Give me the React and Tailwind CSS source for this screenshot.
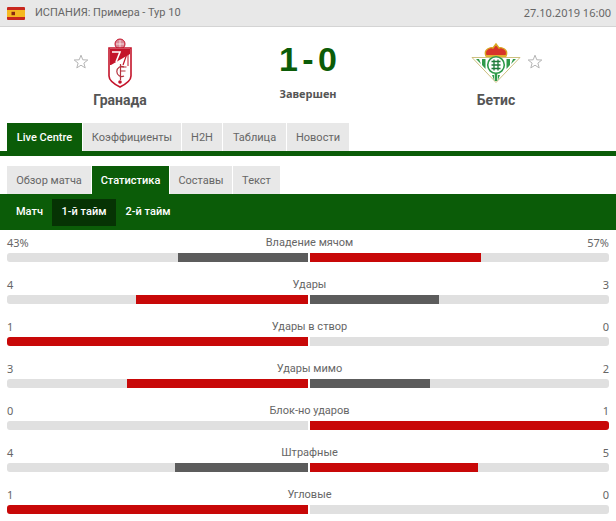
const F = "font-['Roboto','Noto_Sans',sans-serif]";

function Star() {
  return (
    <svg width="16" height="15" viewBox="0 0 16 15" fill="none" stroke="#b5b5b5" strokeWidth="1">
      <path d="M8 1.2 L9.8 5.8 L14.8 6 L10.9 9.1 L12.2 13.9 L8 11.2 L3.8 13.9 L5.1 9.1 L1.2 6 L6.2 5.8 Z" />
    </svg>
  );
}

function Flag() {
  return (
    <svg width="18" height="13" viewBox="0 0 18 13">
      <rect width="18" height="13" rx="1" fill="#c8281e" />
      <rect y="3" width="18" height="7" fill="#f5b921" />
      <rect x="4.5" y="4.8" width="3.5" height="3.4" fill="#8a2a12" />
    </svg>
  );
}

function Granada() {
  return (
    <svg width="24" height="50" viewBox="0 0 24 50">
      <circle cx="12" cy="6" r="5" fill="#d98a96" stroke="#c4142b" strokeWidth="1" />
      <path d="M8 6h8M12 2v8" stroke="#fff" strokeWidth="0.7" />
      <path d="M1 10h22v28c0 5-7 9-11 11C8 47 1 43 1 38Z" fill="#fff" stroke="#c4142b" strokeWidth="1.6" />
      <path d="M2 11h20v5L3 27H2Z" fill="#c4142b" />
      <path d="M4 14h8L8 24" fill="none" stroke="#fff" strokeWidth="1.6" />
      <path d="M20 13 L15 27" stroke="#c4142b" strokeWidth="1.2" />
      <path d="M20 13 L20 28" stroke="#c4142b" strokeWidth="1" />
      <path d="M16 29a5 5 0 1 0 0 9" fill="none" stroke="#b5333f" strokeWidth="1.2" />
      <path d="M12.5 26v16M12.5 29h6M12.5 33h5" stroke="#b5333f" strokeWidth="1.2" />
      <circle cx="12" cy="44" r="1.8" fill="#c4142b" />
    </svg>
  );
}

function Betis() {
  return (
    <svg width="50" height="41" viewBox="0 0 50 41">
      <path d="M15 14c-3-7 5-9 7-8l3-4 3 4c2-1 10 1 7 8Z" fill="#d8342a" stroke="#d9a520" strokeWidth="1.4" />
      <path d="M15 14h20" stroke="#e0b030" strokeWidth="2" />
      <path d="M1 15.5h48L25 40.5Z" fill="#fff" stroke="#c2b060" strokeWidth="0.8" />
      <path d="M5 17h3l2 5ZM11 17h3.5v10L11 23ZM35.5 17H39v6l-3.5 4ZM42 17h3l-5 5ZM21 33h2v5ZM27 33h2l-2 5Z" fill="#2f9a4a" />
      <path d="M23.7 31h2.6v8h-2.6Z" fill="#2f9a4a" />
      <circle cx="25" cy="23" r="8.3" fill="#fff" stroke="#2f9a4a" strokeWidth="1.6" />
      <path d="M20.5 19.5h9M20.5 23h9M20.5 26.5h9M23 17.5v11M27 17.5v11" stroke="#1f7a3a" strokeWidth="1.3" />
    </svg>
  );
}

function Tab({ label, active, width }) {
  return (
    <div className={`flex h-7 items-center justify-center pt-[3px] ${width} ${active ? "bg-[#0b5c08] font-medium text-white" : "bg-[#e8e8e8] text-[#666]"}`}>
      {label}
    </div>
  );
}

const stats = [
  ["43%", "Владение мячом", "57%", 130, "#5c5c5c", 171, "#c80808"],
  ["4", "Удары", "3", 172, "#c80808", 129, "#5c5c5c"],
  ["1", "Удары в створ", "0", 301, "#c80808", 0, "#5c5c5c"],
  ["3", "Удары мимо", "2", 181, "#c80808", 120, "#5c5c5c"],
  ["0", "Блок-но ударов", "1", 0, "#5c5c5c", 300, "#c80808"],
  ["4", "Штрафные", "5", 133, "#5c5c5c", 168, "#c80808"],
  ["1", "Угловые", "0", 301, "#c80808", 0, "#5c5c5c"],
];

function Stat({ row }) {
  const [l, name, r, lw, lc, rw, rc] = row;
  return (
    <div className="h-[42px] px-[7px] pt-[3px]">
      <div className="flex h-5 items-center justify-between text-[#666]">
        <span className="font-['Noto_Sans',sans-serif]">{l}</span>
        <span className="pl-[3px]">{name}</span>
        <span className="font-['Noto_Sans',sans-serif]">{r}</span>
      </div>
      <div className="flex h-[9px] gap-0.5">
        <div className="flex w-[301px] justify-end overflow-hidden rounded-l-[3px] bg-[#e0e0e0]">
          <div className="h-full" style={{ width: lw, background: lc }} />
        </div>
        <div className="flex w-[300px] overflow-hidden rounded-r-[3px] bg-[#e0e0e0]">
          <div className="h-full" style={{ width: rw, background: rc }} />
        </div>
      </div>
    </div>
  );
}

export default function App() {
  return (
    <div className={`h-[521px] w-[616px] overflow-hidden bg-white text-[11px] ${F}`}>
      <div className="flex h-[27px] items-center justify-between border-b border-[#d4d4d4] bg-[#e8e8e8] pl-[7px] pr-[5px] text-[#666]">
        <div className="flex items-center gap-[10px]">
          <Flag />
          <span>ИСПАНИЯ: Примера - Тур 10</span>
        </div>
        <span className="font-['Noto_Sans',sans-serif]">27.10.2019 16:00</span>
      </div>

      <div className="grid h-[96px] grid-cols-[240px_136px_240px]">
        <div className="relative flex flex-col items-center pt-[10px]">
          <div className="flex h-[51px] items-center"><Granada /></div>
          <div className="mt-[2px] text-[14px] leading-5 font-bold text-[#555]">Гранада</div>
          <div className="absolute left-[73px] top-[27px]"><Star /></div>
        </div>
        <div className="flex flex-col items-center pt-[12px]">
          <div className="h-[36px] font-['Liberation_Sans',sans-serif] text-[34px] leading-[40px] font-bold text-[#0b5c08] [word-spacing:-5px]">1 - 0</div>
          <div className="mt-[11px] font-['Noto_Sans',sans-serif] font-bold text-[#555]">Завершен</div>
        </div>
        <div className="relative flex flex-col items-center pt-[12px]">
          <div className="flex h-[47px] items-center"><Betis /></div>
          <div className="mt-[4px] text-[14px] leading-5 font-bold text-[#555]">Бетис</div>
          <div className="absolute left-[151px] top-[27px]"><Star /></div>
        </div>
      </div>

      <div className="flex gap-px pl-[7px]">
        <Tab label="Live Centre" active width="w-[75px]" />
        <Tab label="Коэффициенты" width="w-[98px]" />
        <Tab label="H2H" width="w-[40px]" />
        <Tab label="Таблица" width="w-[63px]" />
        <Tab label="Новости" width="w-[62px]" />
      </div>
      <div className="h-[5px] bg-[#0b5c08]" />

      <div className="mt-[10px] flex gap-px pl-[7px]">
        <Tab label="Обзор матча" width="w-[84px]" />
        <Tab label="Статистика" active width="w-[77px]" />
        <Tab label="Составы" width="w-[62px]" />
        <Tab label="Текст" width="w-[47px]" />
      </div>
      <div className="flex h-9 items-center bg-[#0b5c08] pl-[7px] font-medium text-white">
        <div className="flex h-[27px] w-[45px] items-center justify-center pt-px">Матч</div>
        <div className="flex h-[27px] w-[64px] items-center justify-center bg-[#063304] pt-px">1-й тайм</div>
        <div className="flex h-[27px] w-[64px] items-center justify-center pt-px">2-й тайм</div>
      </div>

      <div>
        {stats.map((s) => (
          <Stat key={s[1]} row={s} />
        ))}
      </div>
    </div>
  );
}
